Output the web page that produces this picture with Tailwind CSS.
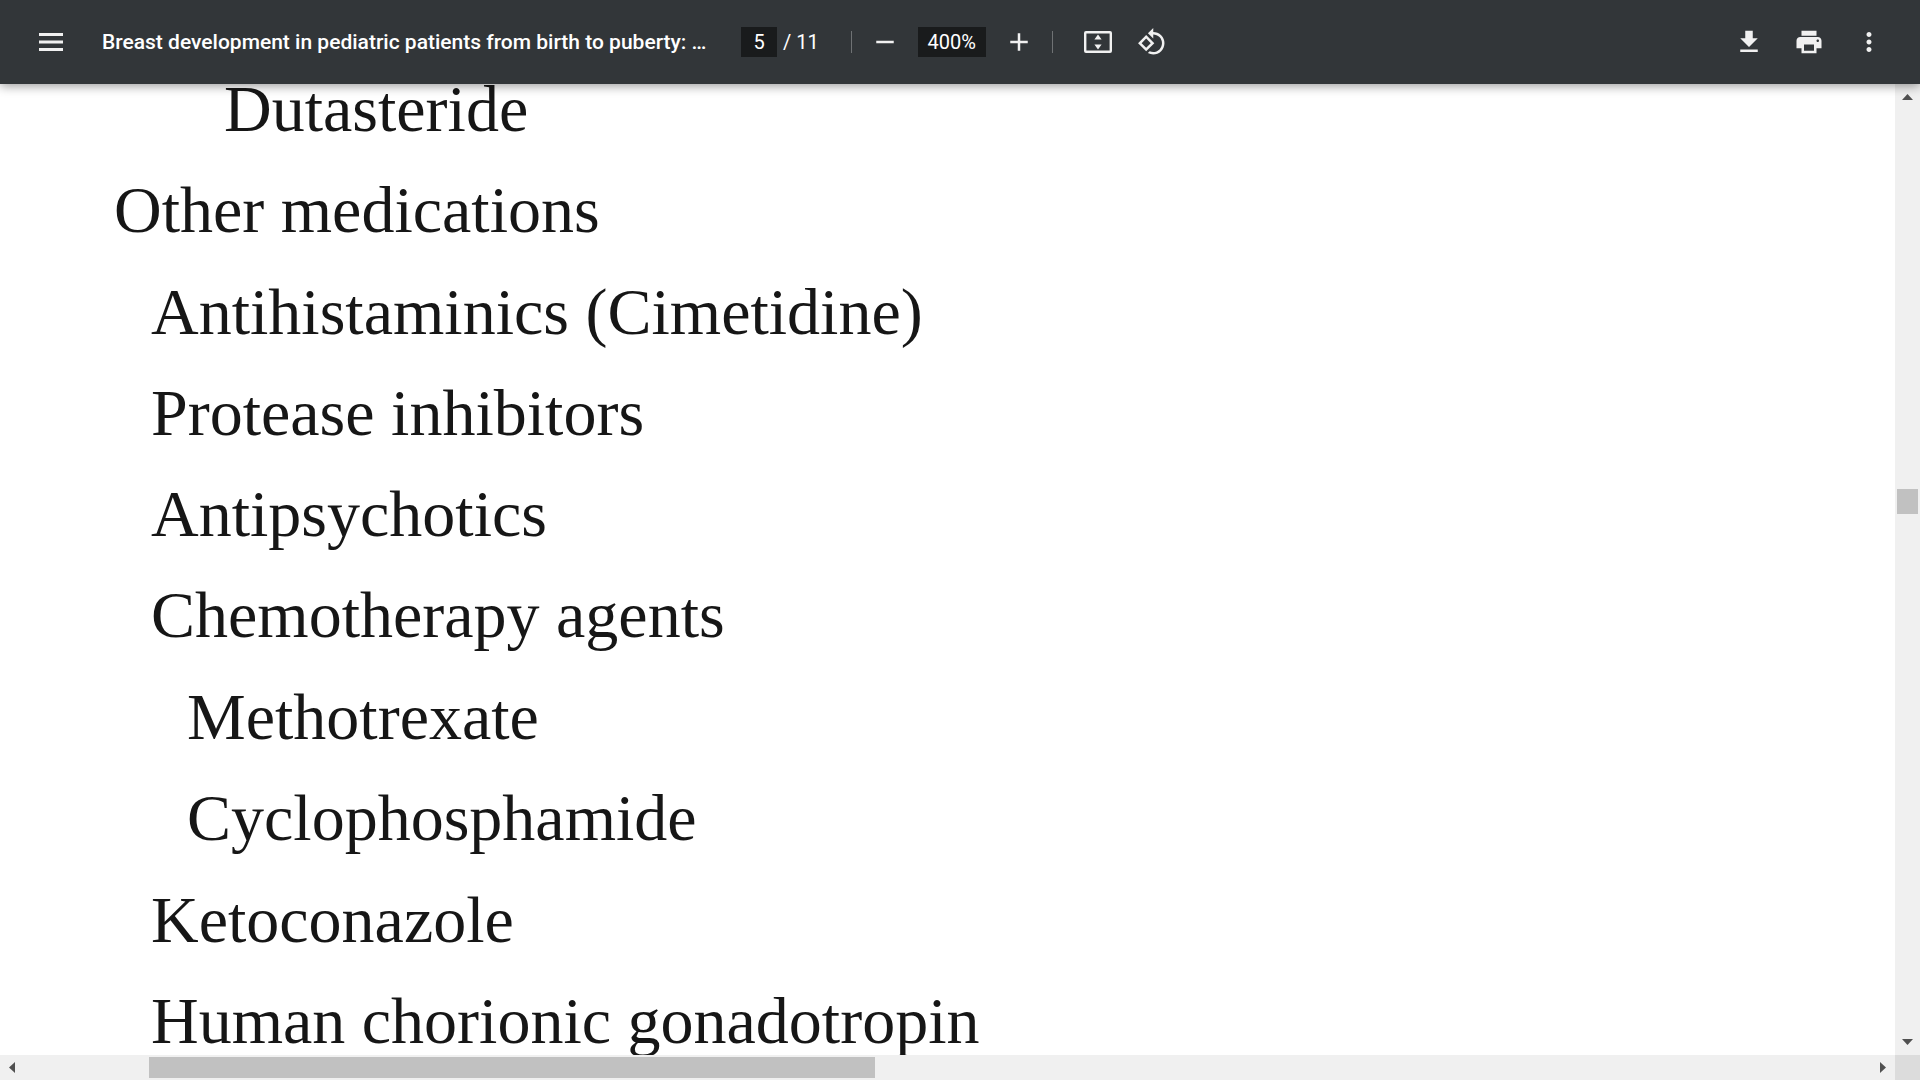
<!DOCTYPE html>
<html lang="en">
<head>
    <meta charset="UTF-8">
    <meta name="viewport" content="width=device-width, initial-scale=1.0">
    <title>Breast development in pediatric patients from birth to puberty</title>
    <script src="https://cdn.jsdelivr.net/npm/@tailwindcss/browser@4"></script>
</head>
<body class="h-screen overflow-hidden flex flex-col bg-white font-['Roboto',sans-serif]">
    <header class="relative z-10 h-[84px] shrink-0 flex items-center justify-between px-[36px] bg-[#323639] text-[#f1f1f1] shadow-[0_2px_10px_rgba(0,0,0,0.4)]">
        <div class="flex items-center">
            <button type="button" aria-label="Menu" class="size-[30px]">
                <svg class="size-[30px]" viewBox="0 0 30 30" fill="currentColor"><path d="M3 6h24v3H3zM3 13.500h24v3H3zM3 21h24v3H3z"/></svg>
            </button>
            <h1 class="ml-[36px] w-[604px] whitespace-nowrap text-[21px] leading-[32px] font-medium text-white">Breast development in pediatric patients from birth to puberty: …</h1>
            <label class="ml-[35px] flex items-center text-[20px] text-white">
                <input type="text" value="5" aria-label="Page number" class="mr-[6px] h-[30px] w-[36px] bg-[#191b1c] text-center">
                <span>/ 11</span>
            </label>
            <span class="ml-[32px] h-[22px] w-px bg-white/30"></span>
            <button type="button" aria-label="Zoom out" class="ml-[18px] size-[30px]">
                <svg class="size-[30px]" viewBox="0 0 24 24" fill="currentColor"><path d="M19 13H5v-2h14v2z"/></svg>
            </button>
            <input type="text" value="400%" aria-label="Zoom level" class="mx-[18px] h-[30px] w-[68px] bg-[#191b1c] text-center text-[20px] text-white">
            <button type="button" aria-label="Zoom in" class="size-[30px]">
                <svg class="size-[30px]" viewBox="0 0 24 24" fill="currentColor"><path d="M19 13h-6v6h-2v-6H5v-2h6V5h2v6h6v2z"/></svg>
            </button>
            <span class="ml-[18px] h-[22px] w-px bg-white/30"></span>
            <button type="button" aria-label="Fit to page" class="ml-[30px] size-[30px]">
                <svg class="size-[30px]" viewBox="0 0 30 30" fill="currentColor"><path fill-rule="evenodd" d="M3 4h24a2 2 0 0 1 2 2v18a2 2 0 0 1-2 2H3a2 2 0 0 1-2-2V6a2 2 0 0 1 2-2zm.4 2.400v17.200h23.200V6.400zM15 7.500l3.600 5h-7.200zM15 22.500l-3.600-5h7.200z"/></svg>
            </button>
            <button type="button" aria-label="Rotate counterclockwise" class="ml-[24px] size-[30px]">
                <svg class="size-[30px]" viewBox="0 0 24 24" fill="currentColor"><path d="M7.34 6.41L.86 12.9l6.49 6.48 6.49-6.48-6.5-6.49zM3.69 12.9l3.66-3.66L11 12.9l-3.66 3.66-3.65-3.66zm15.67-6.26C17.61 4.88 15.3 4 13 4V.76L8.76 5 13 9.24V6c1.79 0 3.58.68 4.95 2.05 2.73 2.73 2.73 7.17 0 9.9C16.58 19.32 14.79 20 13 20c-.97 0-1.94-.21-2.84-.61l-1.49 1.49C10.02 21.62 11.51 22 13 22c2.3 0 4.61-.88 6.36-2.64 3.52-3.51 3.52-9.21 0-12.72z"/></svg>
            </button>
        </div>
        <div class="flex items-center gap-[30px]">
            <button type="button" aria-label="Download" class="size-[30px]">
                <svg class="size-[30px]" viewBox="0 0 24 24" fill="currentColor"><path d="M19 9h-4V3H9v6H5l7 7 7-7zM5 18v2h14v-2H5z"/></svg>
            </button>
            <button type="button" aria-label="Print" class="size-[30px]">
                <svg class="size-[30px]" viewBox="0 0 24 24" fill="currentColor"><path d="M19 8H5c-1.66 0-3 1.34-3 3v6h4v4h12v-4h4v-6c0-1.66-1.34-3-3-3zm-3 11H8v-5h8v5zm3-7c-.55 0-1-.45-1-1s.45-1 1-1 1 .45 1 1-.45 1-1 1zm-1-9H6v4h12V3z"/></svg>
            </button>
            <button type="button" aria-label="More actions" class="size-[30px]">
                <svg class="size-[30px]" viewBox="0 0 24 24" fill="currentColor"><path d="M12 8c1.100 0 2-.9 2-2s-.9-2-2-2-2 .9-2 2 .9 2 2 2zm0 2c-1.100 0-2 .9-2 2s.9 2 2 2 2-.9 2-2-.9-2-2-2zm0 6c-1.100 0-2 .9-2 2s.9 2 2 2 2-.9 2-2-.9-2-2-2z"/></svg>
            </button>
        </div>
    </header>

    <div class="flex min-h-0 flex-1">
        <main class="min-w-0 flex-1 overflow-hidden">
            <ul class="-mt-[26px] pl-[114px] whitespace-nowrap font-['Liberation_Serif',serif] text-[66px] leading-[101px] text-[#161616]">
                <li class="pl-[110px]">Dutasteride</li>
                <li>Other medications
                    <ul class="py-px pl-[37px]">
                        <li>Antihistaminics (Cimetidine)</li>
                        <li>Protease inhibitors</li>
                        <li>Antipsychotics</li>
                        <li>Chemotherapy agents
                            <ul class="py-px pl-[36px]">
                                <li>Methotrexate</li>
                                <li>Cyclophosphamide</li>
                            </ul>
                        </li>
                        <li>Ketoconazole</li>
                        <li>Human chorionic gonadotropin</li>
                    </ul>
                </li>
            </ul>
        </main>
        <!-- vertical scrollbar -->
        <div class="flex w-[25px] shrink-0 flex-col items-center bg-[#f0f0f0] text-[#505050]">
            <button type="button" aria-label="Scroll up" class="h-[25px] w-full">
                <svg class="size-[25px]" viewBox="0 0 25 25" fill="currentColor"><path d="M7 16h11l-5.500-6z"/></svg>
            </button>
            <div class="flex w-full flex-1 flex-col items-center">
                <div class="grow-[380]"></div>
                <div class="h-[25px] w-[21px] bg-[#c1c1c1]"></div>
                <div class="grow-[516]"></div>
            </div>
            <button type="button" aria-label="Scroll down" class="h-[25px] w-full">
                <svg class="size-[25px]" viewBox="0 0 25 25" fill="currentColor"><path d="M7 9h11l-5.500 6z"/></svg>
            </button>
        </div>
    </div>

    <!-- horizontal scrollbar -->
    <div class="flex h-[25px] shrink-0 items-center bg-[#f0f0f0] text-[#505050]">
        <button type="button" aria-label="Scroll left" class="size-[25px]">
            <svg class="size-[25px]" viewBox="0 0 25 25" fill="currentColor"><path d="M15 7v11l-6-5.500z"/></svg>
        </button>
        <div class="flex flex-1">
            <div class="grow-[124]"></div>
            <div class="h-[21px] grow-[726] bg-[#c1c1c1]"></div>
            <div class="grow-[995]"></div>
        </div>
        <button type="button" aria-label="Scroll right" class="size-[25px]">
            <svg class="size-[25px]" viewBox="0 0 25 25" fill="currentColor"><path d="M10 7v11l6-5.500z"/></svg>
        </button>
        <div class="size-[25px] bg-[#dcdcdc]"></div>
    </div>
</body>
</html>
